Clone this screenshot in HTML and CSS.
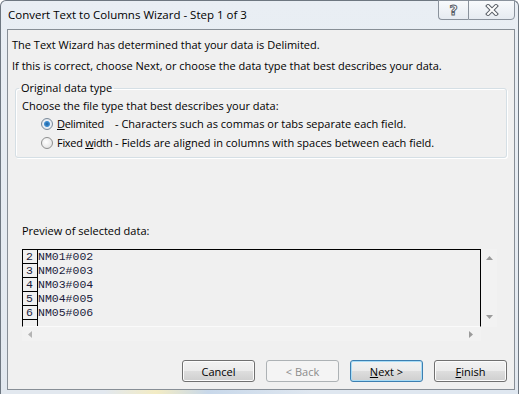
FILE: index.html
```html
<!DOCTYPE html>
<html lang="en">
<head>
  <meta charset="UTF-8">
  <title>Convert Text to Columns Wizard - Step 1 of 3</title>
  <link rel="stylesheet" href="styles.css">
</head>
<body>
  <div class="window">
    <div class="titlebar">
      <span class="title">Convert Text to Columns Wizard - Step 1 of 3</span>
      <div class="caption-btns">
        <button class="cap-btn help">?</button>
        <button class="cap-btn close">
          <svg width="14" height="12" viewBox="0 0 14 12">
            <path d="M3 2 L11 10 M11 2 L3 10" stroke="#5a6068" stroke-width="4" stroke-linecap="square"/>
            <path d="M3 2 L11 10 M11 2 L3 10" stroke="#ffffff" stroke-width="2" stroke-linecap="square"/>
          </svg>
        </button>
      </div>
    </div>

    <div class="client">
      <p class="intro">The Text Wizard has determined that your data is Delimited.</p>
      <p class="intro">If this is correct, choose Next, or choose the data type that best describes your data.</p>

      <fieldset class="group">
        <legend>Original data type</legend>
        <p class="group-lead">Choose the file type that best describes your data:</p>
        <div class="option">
          <span class="radio checked"></span>
          <span class="opt-name"><u>D</u>elimited</span>
          <span class="opt-desc">- Characters such as commas or tabs separate each field.</span>
        </div>
        <div class="option">
          <span class="radio"></span>
          <span class="opt-name">Fixed <u>w</u>idth</span>
          <span class="opt-desc">- Fields are aligned in columns with spaces between each field.</span>
        </div>
      </fieldset>

      <p class="preview-label">Preview of selected data:</p>
      <div class="preview">
        <div class="preview-top">
          <div class="preview-box">
            <div class="data-row"><span class="row-num">2</span><span class="row-text">NM01#002</span></div>
            <div class="data-row"><span class="row-num">3</span><span class="row-text">NM02#003</span></div>
            <div class="data-row"><span class="row-num">4</span><span class="row-text">NM03#004</span></div>
            <div class="data-row"><span class="row-num">5</span><span class="row-text">NM04#005</span></div>
            <div class="data-row"><span class="row-num">6</span><span class="row-text">NM05#006</span></div>
            <div class="data-row"><span class="row-num"></span></div>
          </div>
          <div class="vscroll">
            <svg width="7" height="4" viewBox="0 0 7 4"><path d="M0 4 L3.5 0 L7 4 Z" fill="#9a9a9a"/></svg>
            <svg width="7" height="4" viewBox="0 0 7 4"><path d="M0 0 L3.5 4 L7 0 Z" fill="#9a9a9a"/></svg>
          </div>
        </div>
        <div class="hscroll">
          <svg width="4" height="7" viewBox="0 0 4 7"><path d="M4 0 L0 3.5 L4 7 Z" fill="#b4b4b4"/></svg>
          <svg width="4" height="7" viewBox="0 0 4 7"><path d="M0 0 L4 3.5 L0 7 Z" fill="#9a9a9a"/></svg>
        </div>
      </div>

      <div class="buttons">
        <button class="btn">Cancel</button>
        <button class="btn" disabled>&lt; Back</button>
        <button class="btn btn-default"><u>N</u>ext &gt;</button>
        <button class="btn"><u>F</u>inish</button>
      </div>
    </div>
    <div class="frame-bottom"></div>
  </div>
</body>
</html>
```

FILE: styles.css
```css
/* Global */
body {
  margin: 0;
  padding: 0;
  background-color: #ffffff;
  font-family: "Open Sans", "Noto Sans", sans-serif;
  font-size: 11px;
  color: #000;
  overflow: hidden;
}

p {
  margin: 0;
}

/* Window frame */
.window {
  width: 517px;
  border: 1px solid #6e7781;
  border-bottom: none;
  border-radius: 6px 6px 0 0;
  background: linear-gradient(to bottom, #e9eef4, #e2e8ef);
}

.titlebar {
  height: 28px;
  display: flex;
  justify-content: space-between;
  align-items: flex-start;
}

.title {
  margin: 6px 0 0 7px;
  font-size: 11.5px;
  line-height: 16px;
}

.caption-btns {
  display: flex;
  margin-right: 3px;
  margin-top: -1px;
}

.cap-btn {
  height: 20px;
  padding: 0;
  border: 1px solid #8a929c;
  background: linear-gradient(to bottom, #f8fafc, #e6ebf1);
  display: flex;
  align-items: center;
  justify-content: center;
}

.help {
  width: 30px;
  border-radius: 0 0 0 4px;
  border-right: none;
  font-family: "DejaVu Sans", sans-serif;
  font-size: 14px;
  font-weight: bold;
  color: #fff;
  -webkit-text-stroke: 1px #5a6068;
}

.close {
  width: 47px;
  border-radius: 0 0 4px 0;
}

/* Client area */
.client {
  margin: 0 3px 0 6px;
  height: 359px;
  border: 1px solid #878e96;
  background-color: #f0f0f0;
  padding: 0 7px 0 4px;
  display: flex;
  flex-direction: column;
}

.intro {
  line-height: 16px;
  margin-top: 5px;
}

.intro:first-child {
  margin-top: 7px;
}

/* Group box */
.group {
  margin: 6px 0 0 3px;
  padding: 0 0 5px 6px;
  border: 1px solid #d5dfe5;
  border-radius: 3px;
  box-shadow: inset 1px 1px 0 #fff, 1px 1px 0 #fff;
  min-width: 0;
}

.group legend {
  padding: 0 2px;
  margin-left: -3px;
  line-height: 16px;
}

.group-lead {
  line-height: 16px;
  margin-top: 2px;
}

.option {
  display: flex;
  align-items: center;
  height: 19px;
  margin-left: 19px;
  white-space: nowrap;
}

.radio {
  flex-shrink: 0;
  width: 12px;
  height: 12px;
  border: 1px solid #8e8f8f;
  border-radius: 50%;
  background: radial-gradient(circle at 40% 40%, #ffffff, #dcdcdc);
  box-sizing: border-box;
  margin-right: 4px;
}

.radio.checked {
  border-color: #7a8a9a;
  background: radial-gradient(circle, #1e5f9e 0, #3f8fd2 2.5px, #e9eef4 3.5px, #d8dde2 100%);
}

.opt-name {
  flex-shrink: 0;
  width: 58px;
  letter-spacing: -0.3px;
}

/* Preview */
.preview-label {
  margin: 65px 0 0 10px;
  line-height: 16px;
}

.preview {
  margin: 10px 0 0 10px;
  width: 476px;
}

.preview-top {
  display: flex;
}

.preview-box {
  width: 457px;
  height: 76px;
  border: 1px solid #000;
  border-bottom-color: #fafafa;
  overflow: hidden;
  font-family: "Liberation Mono", "Courier New", monospace;
  font-size: 11.5px;
  color: #1c1c3c;
}

.data-row {
  display: flex;
  height: 14px;
  line-height: 14px;
}

.row-num {
  width: 11px;
  padding-left: 3px;
  border-right: 1px solid #000;
  border-bottom: 1px solid #000;
  box-sizing: content-box;
  height: 13px;
}

.vscroll {
  width: 16px;
  height: 78px;
  background-color: #f2f2f2;
  display: flex;
  flex-direction: column;
  justify-content: space-between;
  align-items: center;
  padding: 7px 0 8px 1px;
  box-sizing: border-box;
}

.hscroll {
  width: 459px;
  height: 14px;
  background-color: #f2f2f2;
  display: flex;
  justify-content: space-between;
  align-items: center;
  padding: 0 8px 0 6px;
  box-sizing: border-box;
}

/* Buttons */
.buttons {
  margin-top: auto;
  margin-bottom: 7px;
  display: flex;
  justify-content: flex-end;
  gap: 11px;
}

.btn {
  width: 73px;
  height: 22px;
  padding: 0;
  border: 1px solid #707070;
  border-radius: 3px;
  background: linear-gradient(to bottom, #f2f2f2 0, #ebebeb 48%, #dddddd 52%, #cfcfcf 100%);
  box-shadow: inset 0 0 0 1px #fcfcfc;
  font-family: "Open Sans", "Noto Sans", sans-serif;
  font-size: 11px;
  color: #000;
}

.btn:disabled {
  border-color: #adb2b5;
  background: #f4f4f4;
  box-shadow: none;
  color: #8c8c8c;
}

.btn-default {
  border-color: #3c7fb1;
  box-shadow: inset 0 0 0 1px #a8dcf6;
}

.frame-bottom {
  height: 6px;
  background: linear-gradient(to right, #e2e8ef 20%, #f3ecc4 30%, #c8d8ea 40%, #dfe7f0 60%);
}
```
